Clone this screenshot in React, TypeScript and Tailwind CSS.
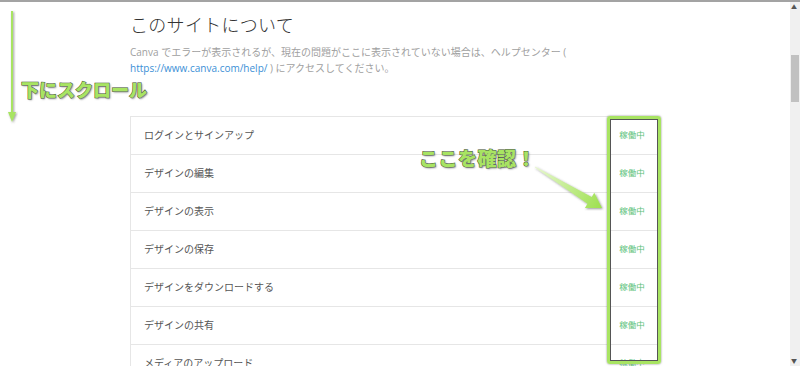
// Status page (Canva) with annotation overlay
const rows = [
  "ログインとサインアップ",
  "デザインの編集",
  "デザインの表示",
  "デザインの保存",
  "デザインをダウンロードする",
  "デザインの共有",
  "メディアのアップロード",
];

const jp = "font-['Open_Sans','Noto_Sans_CJK_JP',sans-serif]";

export default function App() {
  return (
    <div className={`relative h-[366px] w-[800px] overflow-hidden bg-white ${jp}`}>
      {/* top edge */}
      <div className="h-[2px] bg-[#a3a3a3]" />

      <div className="flex h-[364px]">
        {/* Content */}
        <div className="flex-1 pl-[130px] pt-[10px]">
          <h1 className="text-[18px] font-light leading-[26px] text-[#333] tracking-[0.3px]">
            このサイトについて
          </h1>
          <p className="mt-[6px] text-[10px] leading-[16px] text-[#a0a0a0]">
            Canva でエラーが表示されるが、現在の問題がここに表示されていない場合は、ヘルプセンター (
            <br />
            <span className="text-[#3b8fd6]">https://www.canva.com/help/</span> ) にアクセスしてください。
          </p>

          {/* Status table */}
          <div className="mt-[40px] w-[528px] border-l border-t border-[#e6e6e6]">
            {rows.map((r) => (
              <div key={r} className="flex h-[38px] items-center border-b border-[#e6e6e6]">
                <div className="flex-1 pl-[13px] text-[10px] text-[#555]">{r}</div>
                <div className="w-[52px] text-center text-[8.5px] text-[#5cc27a]">稼働中</div>
              </div>
            ))}
          </div>
        </div>

        {/* Scrollbar */}
        <div className="relative w-[10px] bg-[#f0f0f0]">
          <div className="absolute left-[1px] top-[2px] text-[6px] leading-none text-[#555]">▲</div>
          <div className="absolute left-[1px] top-[53px] h-[47px] w-[8px] bg-[#c1c1c1]" />
          <div className="absolute bottom-[2px] left-[1px] text-[6px] leading-none text-[#555]">▼</div>
        </div>
      </div>

      {/* Annotation overlay */}
      <svg className="pointer-events-none absolute left-0 top-0" width="800" height="366">
        <defs>
          <linearGradient id="wedge" x1="535" y1="167" x2="602" y2="208" gradientUnits="userSpaceOnUse">
            <stop offset="0" stopColor="#e8f8d0" />
            <stop offset="1" stopColor="#9de04e" />
          </linearGradient>
          <filter id="sh" x="-20%" y="-20%" width="140%" height="140%">
            <feDropShadow dx="1" dy="1" stdDeviation="1" floodColor="#555" floodOpacity="0.6" />
          </filter>
        </defs>
        {/* scroll arrow */}
        <g filter="url(#sh)">
          <line x1="12" y1="11" x2="12" y2="114" stroke="#a8e462" strokeWidth="2" />
          <polygon points="8,112 16,112 12,122" fill="#a8e462" />
        </g>
        {/* pointer arrow */}
        <polygon
          filter="url(#sh)"
          fill="url(#wedge)"
          points="535,166.5 591.7,197 594.3,192.7 602,208 584.9,208.1 587.5,203.8 535,167.5"
        />
      </svg>

      <div className="absolute left-[607px] top-[116px] h-[248px] w-[54px] rounded-[3px] border-[3px] border-[#a8e462] shadow-[inset_0_0_0_1px_#555,0_0_2px_#777]" />

      <div className="absolute left-[21px] top-[78px] text-[18px] font-black leading-[24px] text-[#a8e462] [-webkit-text-stroke:1px_#3a4a2a] [text-shadow:1px_1px_2px_#777] [paint-order:stroke_fill]">
        下にスクロール
      </div>
      <div className="absolute left-[419px] top-[147px] text-[19px] font-black leading-[24px] tracking-[0.5px] text-[#a8e462] [-webkit-text-stroke:1px_#3a4a2a] [text-shadow:1px_1px_2px_#777] [paint-order:stroke_fill]">
        ここを確認！
      </div>
    </div>
  );
}
